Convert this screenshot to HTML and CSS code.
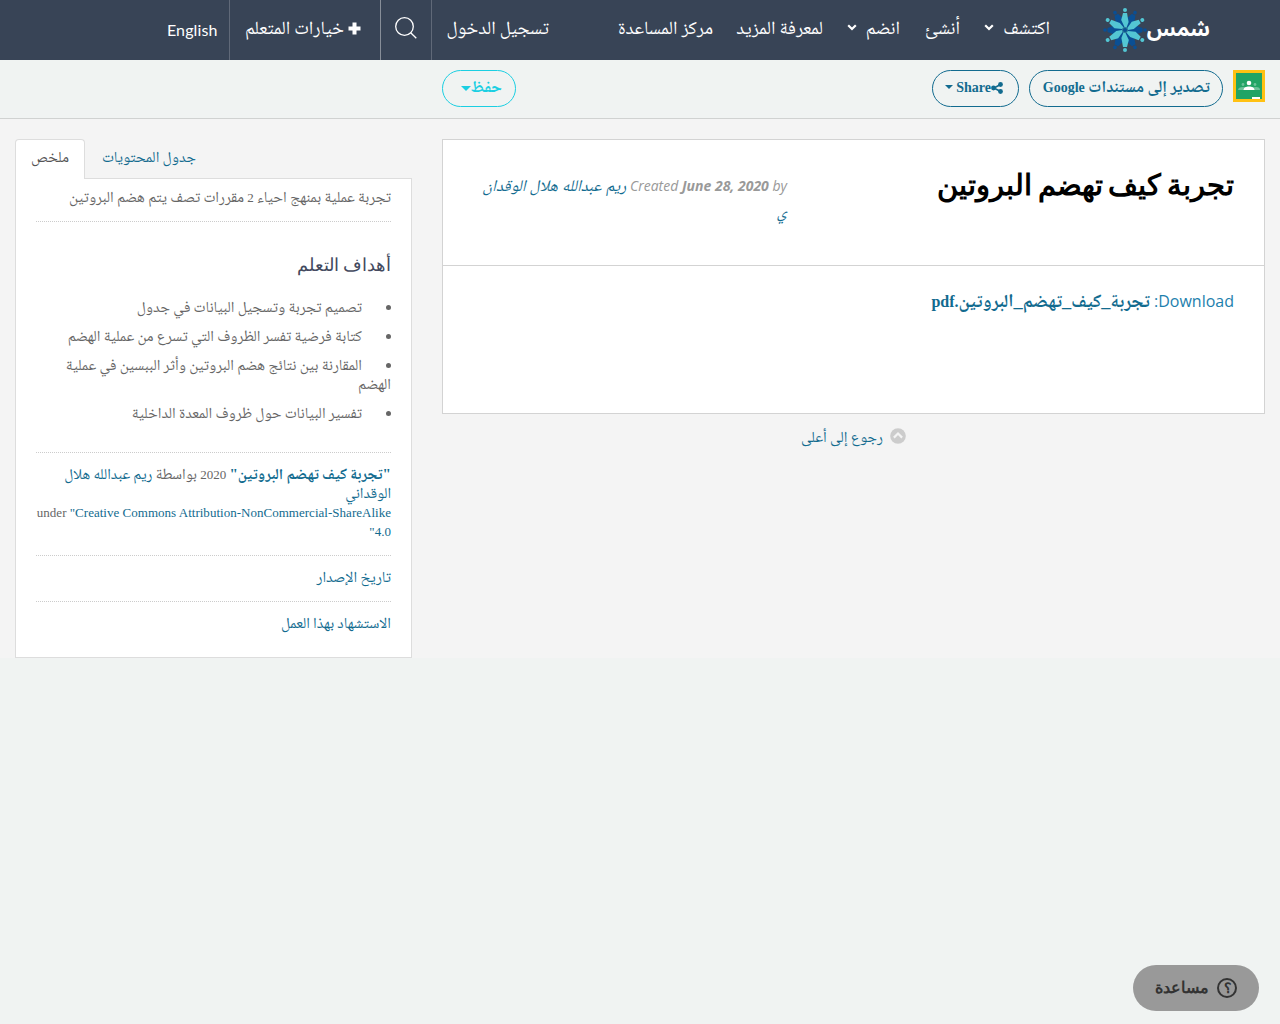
FILE: index.html
```html
<!DOCTYPE html>
<html lang="ar" dir="rtl">
<head>
<meta charset="utf-8">
<title>تجربة كيف تهضم البروتين</title>
<link rel="stylesheet" href="styles.css">
</head>
<body>
<header class="navbar">
  <a class="logo" href="#">
    <span class="logo-text">شمس</span>
    <svg class="logo-mark" viewBox="-22 -22 44 44" width="44" height="44">
      <defs>
        <g id="ray"><path d="M-2 -17H2L3.600 -8L1 -1L-0.500 -3L-3.800 -10Z"/><circle cy="-20" r="2"/></g>
        <g id="ray-short"><path d="M-2 -17.500H2L5 -9L2 -2L-1.500 -3L-5 -9Z"/><circle cy="-20" r="1.800"/></g>
      </defs>
      <g fill="#0a4f94">
        <use href="#ray-short" transform="rotate(30)"/><use href="#ray-short" transform="rotate(90)"/><use href="#ray-short" transform="rotate(150)"/><use href="#ray-short" transform="rotate(210)"/><use href="#ray-short" transform="rotate(270)"/><use href="#ray-short" transform="rotate(330)"/>
      </g>
      <g fill="#53c6d3">
        <use href="#ray"/><use href="#ray" transform="rotate(60)"/><use href="#ray" transform="rotate(120)"/><use href="#ray" transform="rotate(180)"/><use href="#ray" transform="rotate(240)"/><use href="#ray" transform="rotate(300)"/>
      </g>
      <circle r="3" fill="#2b7a96"/><circle r="2" fill="#0a4f94"/>
    </svg>
  </a>
  <nav class="menu">
    <a class="w-discover" href="#">اكتشف<svg class="chev" viewBox="0 0 10 7"><path d="M1.200 1.200L5 5L8.800 1.200"/></svg></a>
    <a class="w-create" href="#">أنشئ</a>
    <a class="w-join" href="#">انضم<svg class="chev" viewBox="0 0 10 7"><path d="M1.200 1.200L5 5L8.800 1.200"/></svg></a>
    <a class="w-more" href="#">لمعرفة المزيد</a>
    <a class="w-help" href="#">مركز المساعدة</a>
  </nav>
  <a class="login" href="#">تسجيل الدخول</a>
  <a class="search" href="#"><svg viewBox="0 0 22 22" width="22" height="22"><circle cx="9.500" cy="9.500" r="8.800"/><path d="M15.700 15.700L21.300 21.300"/></svg></a>
  <a class="learner" href="#"><svg viewBox="0 0 13 13" width="13" height="13"><path d="M4.500 0.500h4v4h4v4h-4v4h-4v-4h-4v-4h4z"/></svg>خيارات المتعلم</a>
  <a class="lang" href="#" dir="ltr">English</a>
</header>

<div class="toolbar">
  <svg class="classroom" viewBox="0 0 32 32" width="32" height="32">
    <path fill="#ffc112" d="M0 0h32v32H0z"/><path fill="#21a465" d="M3 3h26v26H3z"/>
    <g fill="#6cc299"><circle cx="10" cy="14.500" r="1.400"/><circle cx="22" cy="14.500" r="1.400"/><path d="M5 20c0-2 2-3 5-3s4 1 4 3zM18 20c0-2 2-3 5-3s4 1 4 3z"/></g>
    <g fill="#fff"><circle cx="16" cy="13" r="2.300"/><path d="M10.500 20c0-2.600 2.500-3.600 5.500-3.600s5.500 1 5.500 3.600z"/><path d="M19 27h8v2h-8z"/></g>
  </svg>
  <a class="pill export" href="#"><span>تصدير إلى مستندات <span class="latin">Google</span></span></a>
  <a class="pill share" href="#"><svg viewBox="0 0 12 12" width="12" height="12"><path d="M9.500 2.500L3 6l6.500 3.500" fill="none" stroke="#126b8f" stroke-width="1.600"/><circle cx="9.500" cy="2.500" r="2.400"/><circle cx="2.500" cy="6" r="2.400"/><circle cx="9.500" cy="9.500" r="2.400"/></svg><span class="latin">Share</span><i class="caret"></i></a>
  <a class="pill save" href="#">حفظ<i class="caret"></i></a>
</div>

<main class="content">
  <section class="primary">
    <article class="card">
      <div class="card-head">
        <h1>تجربة كيف تهضم البروتين</h1>
        <div class="byline">Created <b>June 28, 2020</b> by <a href="#">ريم عبدالله هلال الوقدان<br>ي</a></div>
      </div>
      <div class="card-body">Download: <a href="#">تجربة_كيف_تهضم_البروتين<span class="latin">.pdf</span></a></div>
    </article>
    <a class="top" href="#"><svg viewBox="0 0 16 16" width="16" height="16"><circle cx="8" cy="8" r="7.800" fill="#ccc"/><path d="M3.900 9.600L8 5.500l4.100 4.100" fill="none" stroke="#f4f4f4" stroke-width="2.200"/></svg>رجوع إلى أعلى</a>
  </section>
  <aside class="side">
    <div class="tabs"><a class="tab" href="#">جدول المحتويات</a><a class="tab active" href="#">ملخص</a></div>
    <div class="panel">
      <p class="abstract">تجربة عملية بمنهج احياء <span class="latin">2</span> مقررات تصف يتم هضم البروتين</p>
      <div class="goals">
        <h2>أهداف التعلم</h2>
        <ul>
          <li>تصميم تجربة وتسجيل البيانات في جدول</li>
          <li>كتابة فرضية تفسر الظروف التي تسرع من عملية الهضم</li>
          <li>المقارنة بين نتائج هضم البروتين وأثر الببسين في عملية الهضم</li>
          <li>تفسير البيانات حول ظروف المعدة الداخلية</li>
        </ul>
      </div>
      <div class="license"><a href="#"><b>"تجربة كيف تهضم البروتين"</b></a> <span class="latin">2020</span> بواسطة <a href="#">ريم عبدالله هلال الوقداني</a><br><span class="latin terms">under <a href="#">"Creative Commons Attribution-NonCommercial-ShareAlike 4.0"</a></span></div>
      <div class="row"><a href="#">تاريخ الإصدار</a></div>
      <div class="row last"><a href="#">الاستشهاد بهذا العمل</a></div>
    </div>
  </aside>
</main>

<a class="help" href="#"><svg viewBox="0 0 20 20" width="20" height="20"><circle cx="10" cy="10" r="9"/></svg><span class="q">؟</span>مساعدة</a>
</body>
</html>
```
FILE: styles.css
```css
* { box-sizing: border-box; }
body { margin: 0; min-height: 1024px; background: #f0f3f2; font: 15.4px/19px "Liberation Serif", "Noto Naskh Arabic", serif; word-spacing: -0.6px; color: #666; }
a { color: #126b8f; text-decoration: none; }
svg { display: block; flex: none; }
.latin { font-size: 13px; line-height: 1; }

.navbar { display: flex; height: 60px; background: #384456; padding-right: 70px; }
.navbar a { display: flex; align-items: center; color: #fff; font-size: 18.8px; white-space: nowrap; }
.logo { width: 148px; }
.navbar .logo-text { width: 63px; padding-bottom: 4px; font: bold 21px/40px "Noto Sans Arabic UI", sans-serif; }
.menu { display: flex; width: 498px; }
.menu a { padding: 0 12px 6px; gap: 9px; }
.chev { width: 10px; height: 7px; fill: none; stroke: #fff; stroke-width: 2.2; }
.w-discover { width: 90px; }
.w-create { width: 60px; }
.w-join { width: 77px; }
.w-more { width: 110px; }
.w-help { width: 120px; }
.navbar .login { width: 133px; padding: 0 15px 6px; border-left: 1px solid #606978; }
.navbar .search { width: 51px; justify-content: center; padding-bottom: 5px; border-left: 1px solid #878e98; }
.search svg { fill: none; stroke: #fff; stroke-width: 1.3; }
.navbar .learner { width: 151px; padding: 0 19px 6px; gap: 4px; border-left: 1px solid #606978; }
.learner svg { fill: #fff; position: relative; top: 1px; }
.navbar .lang { width: 74px; padding: 0 12px 2px; font: 16px Lato, sans-serif; letter-spacing: 0.1px; }

.toolbar { display: flex; height: 59px; padding: 10px 15px 0; border-bottom: 1px solid #d0d2d1; }
.pill { display: flex; align-items: center; height: 37px; margin-right: 10px; padding: 0 12px 4px; border: 1px solid #126b8f; border-radius: 19px; font-size: 16.4px; font-weight: bold; white-space: nowrap; }
.pill .latin { font-size: 14px; }
.export { width: 194px; }
.share { width: 87px; padding: 0 15px 1px 12px; }
.share svg { fill: #126b8f; }
.save { width: 74px; margin-right: 416px; padding-right: 13px; border-color: #1bcfe2; color: #1bcfe2; }
.caret { border: 4px solid transparent; border-top-color: currentColor; border-bottom: 0; margin: -3px 3px 0 0; }
.save .caret { border-width: 5px 5px 0; margin: 3px 0 0; }

.content { display: flex; gap: 30px; padding: 20px 15px 0; height: 539px; background: #f4f4f4; }
.primary { width: 823px; }
.card { height: 275px; border: 1px solid #d3d3d3; background: #fff; }
.card-head { display: flex; justify-content: space-between; height: 126px; padding: 25px 30px 0; border-bottom: 1px solid #d3d3d3; }
h1 { margin: 0; font: bold 28.6px/41px "Liberation Serif", serif; word-spacing: -1.6px; color: #000; white-space: nowrap; }
.byline { width: 314px; padding-top: 8px; font: italic 14px/26px "Open Sans", serif; word-spacing: 0; color: #999; white-space: nowrap; }
.byline a { font: italic 16.4px/20px "Liberation Serif", "Noto Naskh Arabic", serif; }
.card-body { padding: 22px 30px; font: 16px/26px "Open Sans", serif; word-spacing: 0; color: #1d80ad; }
.card-body a { font: bold 18.4px/22px "Liberation Serif", "Noto Naskh Arabic", serif; color: #126b8f; }
.card-body .latin { font-size: 16px; }
.top { display: flex; justify-content: center; gap: 7px; padding-top: 14px; line-height: 17px; }

.side { width: 397px; }
.tabs { display: flex; justify-content: flex-end; height: 40px; }
.tab { width: 124px; padding: 7px 15px; margin-left: 3px; border: 1px solid transparent; white-space: nowrap; }
.tab.active { width: 70px; height: 40px; margin: 0; border-color: #ddd; border-bottom: 0; border-radius: 4px 4px 0 0; background: #fff; color: #555; position: relative; }
.panel { height: 480px; margin-top: -1px; padding: 8px 20px 0; border: 1px solid #ddd; background: #fff; }
.abstract { height: 35px; margin: 0; border-bottom: 1px dotted #ccc; white-space: nowrap; }
.goals { height: 231px; border-bottom: 1px dotted #ccc; overflow: hidden; }
h2 { margin: 30px 0 19px; font: 18px/26px "Liberation Serif", serif; color: #434a5e; }
ul { margin: 0; padding: 0; list-style: none; }
li { margin-bottom: 10px; }
li::before { content: ""; display: inline-block; width: 5px; height: 5px; margin-left: 24px; border-radius: 50%; background: #666; vertical-align: 2px; }
.license { height: 103px; padding-top: 11px; border-bottom: 1px dotted #ccc; font-size: 15.2px; }
.terms { letter-spacing: 0.02px; word-spacing: 0; }
.row { height: 46px; padding-top: 11px; border-bottom: 1px dotted #ccc; }
.last { border: 0; }

.help { position: fixed; right: 21px; bottom: 13px; display: flex; align-items: center; width: 126px; height: 46px; padding: 0 22px; gap: 8px; border-radius: 23px; background: #999; color: #333; font: bold 15.6px "Liberation Sans", sans-serif; }
.help svg { fill: none; stroke: #333; stroke-width: 2; }
.q { width: 20px; margin-right: -28px; text-align: center; font-size: 14px; }
```
